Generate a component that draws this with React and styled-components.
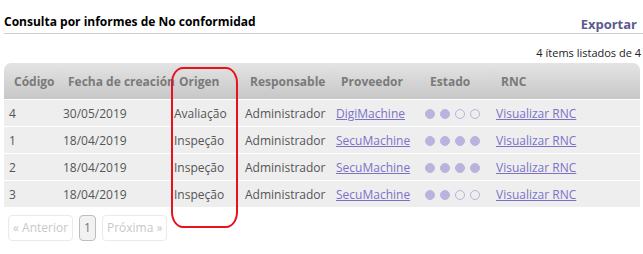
import React from 'react';
import styled, { createGlobalStyle } from 'styled-components';

const GlobalStyle = createGlobalStyle`
  body {
    margin: 0;
    background: #fff;
    font-family: "Open Sans", "Noto Sans", sans-serif;
  }
`;

const rows = [
  { code: '4', date: '30/05/2019', origin: 'Avaliação', owner: 'Administrador', vendor: 'DigiMachine', state: 2 },
  { code: '1', date: '18/04/2019', origin: 'Inspeção', owner: 'Administrador', vendor: 'SecuMachine', state: 4 },
  { code: '2', date: '18/04/2019', origin: 'Inspeção', owner: 'Administrador', vendor: 'SecuMachine', state: 4 },
  { code: '3', date: '18/04/2019', origin: 'Inspeção', owner: 'Administrador', vendor: 'SecuMachine', state: 2 },
];

const columns = [
  { label: 'Código', width: 54 },
  { label: 'Fecha de creación', width: 111 },
  { label: 'Origen', width: 71 },
  { label: 'Responsable', width: 91 },
  { label: 'Proveedor', width: 89 },
  { label: 'Estado', width: 71 },
  { label: 'RNC' },
];

function App() {
  return (
    <Page>
      <GlobalStyle />
      <TopBar>
        <Title>Consulta por informes de No conformidad</Title>
        <Export href="#">Exportar</Export>
      </TopBar>
      <Count>4 ítems listados de 4</Count>
      <TableWrap>
        <Table>
          <colgroup>
            {columns.map((c) => (
              <col key={c.label} style={c.width ? { width: c.width } : undefined} />
            ))}
          </colgroup>
          <thead>
            <tr>
              {columns.map((c, i) => (
                <Th key={c.label} $first={i === 0} $last={i === columns.length - 1}>
                  {c.label}
                </Th>
              ))}
            </tr>
          </thead>
          <tbody>
            {rows.map((r) => (
              <tr key={r.code}>
                <Td>{r.code}</Td>
                <Td>{r.date}</Td>
                <Td>{r.origin}</Td>
                <Td>{r.owner}</Td>
                <Td><LinkText href="#">{r.vendor}</LinkText></Td>
                <Td>
                  <Dots>
                    {[0, 1, 2, 3].map((d) => (
                      <Dot key={d} $filled={d < r.state} />
                    ))}
                  </Dots>
                </Td>
                <Td><LinkText href="#">Visualizar RNC</LinkText></Td>
              </tr>
            ))}
          </tbody>
        </Table>
        <Highlight />
      </TableWrap>
      <Pager>
        <PageBtn>« Anterior</PageBtn>
        <PageBtn $current>1</PageBtn>
        <PageBtn>Próxima »</PageBtn>
      </Pager>
    </Page>
  );
}

const Page = styled.div`
  width: 643px;
  padding-left: 4px;
  box-sizing: border-box;
`;

const TopBar = styled.div`
  display: flex;
  justify-content: space-between;
  align-items: flex-end;
  height: 34px;
  border-bottom: 1px solid #cfcfcf;
  box-sizing: border-box;
`;

const Title = styled.h1`
  margin: 0 0 3px;
  font-size: 12px;
  font-weight: 700;
  color: #000;
`;

const Export = styled.a`
  font-size: 13px;
  font-weight: 700;
  color: #5c5a8e;
  text-decoration: none;
  margin: 0 6px 0 0;
  line-height: 18px;
`;

const Count = styled.div`
  text-align: right;
  font-size: 11px;
  color: #222;
  height: 29px;
  line-height: 38px;
  white-space: nowrap;
  margin-right: 2px;
`;

const TableWrap = styled.div`
  position: relative;
  width: 636px;
`;

const Table = styled.table`
  width: 100%;
  border-collapse: collapse;
  table-layout: fixed;
  font-size: 12px;
`;

const Th = styled.th`
  height: 36px;
  padding: 0 0 0 10px;
  text-align: left;
  font-weight: 700;
  color: #7a7a7a;
  white-space: nowrap;
  background: linear-gradient(#e4e4e4, #c7c7c7);
  border-top-left-radius: ${(p) => (p.$first ? '7px' : '0')};
  border-top-right-radius: ${(p) => (p.$last ? '7px' : '0')};
`;

const Td = styled.td`
  height: 26px;
  padding: 0 0 0 5px;
  background: #eeeeee;
  border-top: 1px solid #fff;
  color: #555;
  white-space: nowrap;
`;

const LinkText = styled.a`
  color: #7b72c8;
  text-decoration: underline;
`;

const Dots = styled.span`
  display: inline-flex;
  gap: 5px;
  vertical-align: middle;
`;

const Dot = styled.span`
  width: 10px;
  height: 10px;
  border-radius: 50%;
  box-sizing: border-box;
  background: ${(p) => (p.$filled ? '#bbb3dd' : 'transparent')};
  border: 1.5px solid #bbb3dd;
`;

const Highlight = styled.div`
  position: absolute;
  left: 167px;
  top: 4px;
  width: 67px;
  height: 161px;
  border: 2.5px solid #e8121c;
  border-radius: 12px / 16px;
  box-sizing: border-box;
  pointer-events: none;
`;

const Pager = styled.div`
  display: flex;
  gap: 6px;
  margin: 8px 0 0 4px;
`;

const PageBtn = styled.span`
  height: 26px;
  line-height: 24px;
  box-sizing: border-box;
  padding: 0 4px;
  font-size: 12px;
  color: ${(p) => (p.$current ? '#777' : '#c8c8c8')};
  background: ${(p) => (p.$current ? '#f2f2f2' : '#fff')};
  border: 1px solid ${(p) => (p.$current ? '#bdbdbd' : '#eaeaea')};
  border-radius: 4px;
`;

export default App;
